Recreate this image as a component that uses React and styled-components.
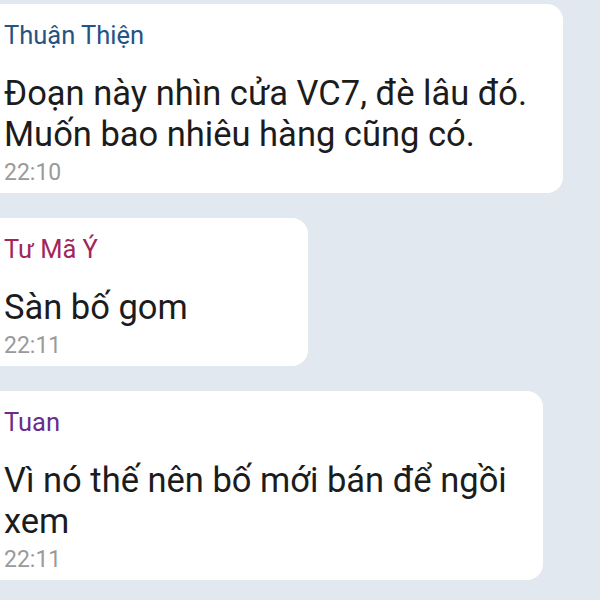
import React from "react";
import styled, { createGlobalStyle } from "styled-components";

const Global = createGlobalStyle`
  html, body {
    margin: 0;
    padding: 0;
    background: #e2e8f0;
  }
  body {
    font-family: Roboto, "Noto Sans", "Liberation Sans", sans-serif;
    -webkit-font-smoothing: antialiased;
  }
`;

const Chat = styled.div`
  width: 600px;
  height: 600px;
  overflow: hidden;
  background: #e2e8f0;
  display: flex;
  flex-direction: column;
  align-items: flex-start;
  gap: 25px;
  padding-top: 4px;
  box-sizing: border-box;
`;

const Bubble = styled.div`
  background: #ffffff;
  width: ${(p) => p.$width}px;
  box-sizing: border-box;
  border-radius: 0 16px 16px 0;
  padding: 16px 10px 6px 4px;
  display: flex;
  flex-direction: column;
`;

const Name = styled.div`
  font-size: 25.5px;
  line-height: 30px;
  color: ${(p) => p.$color};
`;

const Text = styled.div`
  margin-top: 23px;
  font-size: 34.5px;
  line-height: 41px;
  color: #1c1c1c;
  white-space: nowrap;
`;

const Time = styled.div`
  margin-top: 4px;
  font-size: 23px;
  line-height: 28px;
  color: #9a9a9a;
`;

const messages = [
  {
    name: "Thuận Thiện",
    color: "#245483",
    width: 563,
    lines: ["Đoạn này nhìn cửa VC7, đè lâu đó.", "Muốn bao nhiêu hàng cũng có."],
    time: "22:10",
  },
  {
    name: "Tư Mã Ý",
    color: "#a2265c",
    width: 308,
    lines: ["Sàn bố gom"],
    time: "22:11",
  },
  {
    name: "Tuan",
    color: "#6b2c8c",
    width: 543,
    lines: ["Vì nó thế nên bố mới bán để ngồi", "xem"],
    time: "22:11",
  },
];

export default function App() {
  return (
    <>
      <Global />
      <Chat>
        {messages.map((m, i) => (
          <Bubble key={i} $width={m.width}>
            <Name $color={m.color}>{m.name}</Name>
            <Text>
              {m.lines.map((l, j) => (
                <div key={j}>{l}</div>
              ))}
            </Text>
            <Time>{m.time}</Time>
          </Bubble>
        ))}
      </Chat>
    </>
  );
}
